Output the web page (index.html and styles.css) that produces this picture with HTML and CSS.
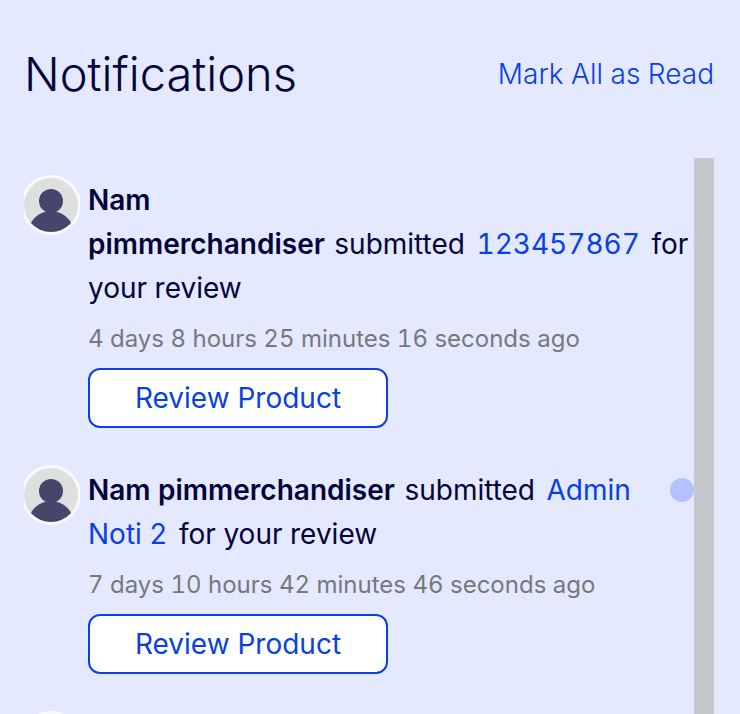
FILE: index.html
```html
<!DOCTYPE html>
<html lang="en">
<head>
    <meta charset="UTF-8">
    <meta name="viewport" content="width=device-width, initial-scale=1.0">
    <title>Notifications</title>
    <link rel="stylesheet" href="styles.css">
</head>
<body>
<svg width="0" height="0" class="defs">
    <defs>
        <clipPath id="face"><circle cx="27" cy="30" r="27"/></clipPath>
        <symbol id="avatar" viewBox="0 0 56 60">
            <circle cx="27" cy="30" r="30" fill="#f8faff"/>
            <circle cx="27" cy="30" r="27" fill="#dee0e0"/>
            <g clip-path="url(#face)" fill="#47456b">
                <circle cx="27" cy="26" r="12"/>
                <circle cx="27" cy="59" r="23"/>
            </g>
        </symbol>
    </defs>
</svg>

<div class="panel">
    <div class="header">
        <h1>Notifications</h1>
        <a href="#" class="mark">Mark All as Read</a>
    </div>

    <div class="content">
        <div class="list">
            <div class="item">
                <svg class="avatar"><use href="#avatar"/></svg>
                <div class="info">
                    <p class="message"><b>Nam pimmerchandiser</b>&nbsp;submitted&nbsp;<a href="#">123457867</a> for your review</p>
                    <p class="time">4 days 8 hours 25 minutes 16 seconds ago</p>
                    <button type="button" class="review">Review Product</button>
                </div>
            </div>

            <div class="item">
                <svg class="avatar"><use href="#avatar"/></svg>
                <div class="info">
                    <p class="message"><b>Nam pimmerchandiser</b>&nbsp;submitted&nbsp;<a href="#">Admin Noti 2</a> for your review</p>
                    <p class="time">7 days 10 hours 42 minutes 46 seconds ago</p>
                    <button type="button" class="review">Review Product</button>
                </div>
                <span class="unread"></span>
            </div>

            <div class="item">
                <svg class="avatar"><use href="#avatar"/></svg>
            </div>
        </div>
        <div class="track"></div>
    </div>
</div>
</body>
</html>
```

FILE: styles.css
```css
* {
    box-sizing: border-box;
}

body {
    margin: 0;
    background: #e4e9ff;
    color: #03053a;
    font-family: Inter, "Liberation Sans", sans-serif;
    font-size: 28px;
    font-variant-numeric: tabular-nums;
}

h1, p {
    margin: 0;
}

a {
    color: #0a3fe6;
    text-decoration: none;
}

.defs {
    position: absolute;
}

.panel {
    height: 100vh;
    padding: 0 26px 0 24px;
    display: flex;
    flex-direction: column;
    overflow: hidden;
}

.header {
    display: flex;
    align-items: center;
    justify-content: space-between;
    padding: 44px 0 54px;
}

h1 {
    font-size: 47px;
    line-height: 60px;
    font-weight: 300;
}

.mark {
    font-weight: 300;
}

.content {
    flex: 1;
    min-height: 0;
    display: flex;
}

.list {
    flex: 1;
    padding-top: 17px;
    overflow: hidden;
}

.item {
    display: flex;
    gap: 8px;
    margin-bottom: 37px;
}

.avatar {
    width: 56px;
    height: 60px;
    flex-shrink: 0;
}

.info {
    flex: 1;
    padding-top: 3px;
}

.message {
    line-height: 44px;
}

.message b {
    margin-right: 2px;
    font-weight: 600;
}

.message a {
    margin: 0 4px;
}

.time {
    font-size: 24px;
    line-height: 58px;
    color: #75797d;
}

.review {
    display: block;
    width: 300px;
    height: 60px;
    border: 2px solid #0a3fe6;
    border-radius: 12px;
    background: #fff;
    color: #0a3fe6;
    font-family: inherit;
    font-size: 28px;
}

/* new notification dot */
.unread {
    width: 24px;
    height: 24px;
    margin-top: 13px;
    border-radius: 50%;
    background: #b3c1ff;
}

.track {
    width: 20px;
    background: #c5c8cb;
}
```
